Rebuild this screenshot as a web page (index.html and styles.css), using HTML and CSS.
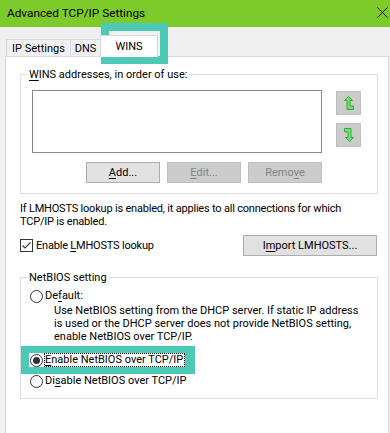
FILE: index.html
```html
<!DOCTYPE html>
<html>
<head>
<meta charset="utf-8">
<link rel="stylesheet" href="styles.css">
</head>
<body>
<div class="titlebar">
  <span class="title">Advanced TCP/IP Settings</span>
  <svg class="close" width="11" height="11" viewBox="0 0 11 11"><path d="M0.5 0.5 L10.5 10.5 M10.5 0.5 L0.5 10.5" stroke="#000" stroke-width="1" fill="none"/></svg>
</div>
<div class="tabs">
  <div class="tab tab1">IP Settings</div>
  <div class="tab tab2">DNS</div>
  <div class="tab sel">WINS</div>
</div>
<div class="panel">
  <div class="group g1">
    <div class="legend"><u>W</u>INS addresses, in order of use:</div>
    <div class="listrow">
      <div class="listbox"></div>
      <div class="arrows">
        <div class="arrowbtn">
          <svg width="10" height="14" viewBox="0 0 10 14"><polygon points="4.5,0.5 8.5,4.5 6,4.5 6,10 9.5,10 9.5,13.5 3,13.5 3,4.5 0.5,4.5" fill="#74df74" stroke="#3aa53a" stroke-width="1"/></svg>
        </div>
        <div class="arrowbtn">
          <svg width="10" height="14" viewBox="0 0 10 14"><g transform="rotate(180 5 7)"><polygon points="4.5,0.5 8.5,4.5 6,4.5 6,10 9.5,10 9.5,13.5 3,13.5 3,4.5 0.5,4.5" fill="#74df74" stroke="#3aa53a" stroke-width="1"/></g></svg>
        </div>
      </div>
    </div>
    <div class="btnrow">
      <div class="btn"><u>A</u>dd...</div>
      <div class="btn dis"><u>E</u>dit...</div>
      <div class="btn dis">Remo<u>v</u>e</div>
    </div>
  </div>
  <p class="note">If LMHOSTS lookup is enabled, it applies to all connections for which<br>TCP/IP is enabled.</p>
  <div class="checkrow">
    <div class="check">
      <span class="cb"><svg width="11" height="11" viewBox="0 0 11 11"><path d="M1.5 5.5 L4 8 L9.5 2.5" stroke="#333" stroke-width="1.1" fill="none"/></svg></span>
      <span class="cbtext">Enable <u>L</u>MHOSTS lookup</span>
    </div>
    <div class="btn import">I<u>m</u>port LMHOSTS...</div>
  </div>
  <div class="group g2">
    <div class="legend">NetBIOS setting</div>
    <div class="radio"><span class="rb"></span><span class="rt">De<u>f</u>ault:</span></div>
    <p class="desc">Use NetBIOS setting from the DHCP server. If static IP address<br>is used or the DHCP server does not provide NetBIOS setting,<br>enable NetBIOS over TCP/IP.</p>
    <div class="hl">
      <div class="radio on"><span class="rb"></span><span class="rt focus"><u>E</u>nable NetBIOS over TCP/IP</span></div>
    </div>
    <div class="radio"><span class="rb"></span><span class="rt">Di<u>s</u>able NetBIOS over TCP/IP</span></div>
  </div>
</div>
<div class="tabmark"></div>
</body>
</html>
```
FILE: styles.css
```css
* { box-sizing: border-box; }
html, body { margin: 0; padding: 0; }
body {
  width: 390px;
  height: 433px;
  overflow: hidden;
  position: relative;
  background: #f0f0f0;
  font-family: Roboto, "Noto Sans", sans-serif;
  font-size: 11px;
  color: #000;
}
u { text-decoration-thickness: 1px; text-underline-offset: 1.5px; }

.titlebar {
  height: 27px;
  background: #7dcb2a;
  display: flex;
  align-items: center;
  justify-content: space-between;
  padding: 0 2px 0 7px;
}
.title { font-size: 11.8px; line-height: 15px; margin-top: -1px; }
.close { display: block; margin-top: -3px; }

.tabs {
  height: 29px;
  display: flex;
  align-items: flex-end;
  padding-left: 6px;
}
.tab {
  height: 17px;
  border: 1px solid #d9d9d9;
  border-bottom: 0;
  background: #f0f0f0;
  display: flex;
  align-items: center;
  justify-content: center;
  line-height: 13px;
}
.tab1 { width: 65px; }
.tab2 { width: 31px; margin-left: -1px; }
.tab.sel {
  width: 58px;
  height: 22px;
  margin-left: -1px;
  margin-bottom: -1px;
  background: #fff;
  position: relative;
  z-index: 1;
  padding-bottom: 1px;
}

.panel {
  margin-left: 5px;
  width: 384px;
  height: 380px;
  border: 1px solid #d9d9d9;
  background: #fff;
}

.group {
  width: 358px;
  margin-left: 14px;
  border: 1px solid #dcdcdc;
  padding-bottom: 10px;
}
.g1 { margin-top: 17px; }
.g2 { margin-top: 21px; }
.legend {
  width: fit-content;
  margin: -7px 0 0 6px;
  padding: 0 2px;
  background: #fff;
  line-height: 13px;
}

.listrow { display: flex; margin: 9px 0 0 11px; }
.listbox { width: 290px; height: 63px; border: 1px solid #828790; background: #fff; }
.arrows { display: flex; flex-direction: column; gap: 8px; margin: 1px 0 0 14px; }
.arrowbtn {
  width: 25px;
  height: 24px;
  background: #cccccc;
  border: 1px solid #bfbfbf;
  display: flex;
  align-items: center;
  justify-content: center;
}
.arrowbtn svg { display: block; }

.btnrow {
  display: flex;
  justify-content: flex-end;
  gap: 7px;
  width: 290px;
  margin: 9px 0 0 11px;
}
.btn {
  width: 74px;
  height: 21px;
  border: 1px solid #adadad;
  background: #e1e1e1;
  display: flex;
  align-items: center;
  justify-content: center;
  line-height: 13px;
}
.btn.dis { background: #cccccc; border-color: #bfbfbf; color: #838383; }

.note { margin: 8px 0 0 14px; line-height: 13px; letter-spacing: -0.2px; }

.checkrow {
  display: flex;
  justify-content: space-between;
  align-items: center;
  width: 357px;
  margin: 7px 0 0 14px;
}
.check { display: flex; align-items: center; }
.cb {
  width: 13px;
  height: 13px;
  border: 1px solid #333;
  background: #fff;
  display: flex;
  align-items: center;
  justify-content: center;
}
.cb svg { display: block; }
.cbtext { margin-left: 3px; line-height: 13px; letter-spacing: -0.2px; }
.btn.import { width: 134px; }

.radio {
  display: flex;
  align-items: center;
  height: 14px;
  padding-left: 8px;
  line-height: 12px;
}
.g2 .legend + .radio { margin-top: 5px; }
.rb {
  width: 13px;
  height: 13px;
  border: 1px solid #333;
  border-radius: 50%;
  background: #fff;
  display: flex;
  align-items: center;
  justify-content: center;
  flex: none;
  margin-left: 1px;
}
.radio.on .rb::after {
  content: "";
  width: 7px;
  height: 7px;
  border-radius: 50%;
  background: #333;
}
.rt { margin-left: 1px; padding: 0 1px 0 0; border: 1px solid transparent; line-height: 12px; }
.rt.focus { border: 1px dotted #000; }

.desc { margin: 1px 0 0 33px; line-height: 13px; }

.hl {
  width: fit-content;
  margin-top: 3px;
  padding: 7px 10px 7px 8px;
  background: #4ec9b5;
}
.hl .radio { padding-left: 0; background: #fff; }

.tabmark {
  position: absolute;
  left: 101px;
  top: 23px;
  width: 67px;
  height: 41px;
  border: 8px solid #4ec9b5;
}
```
